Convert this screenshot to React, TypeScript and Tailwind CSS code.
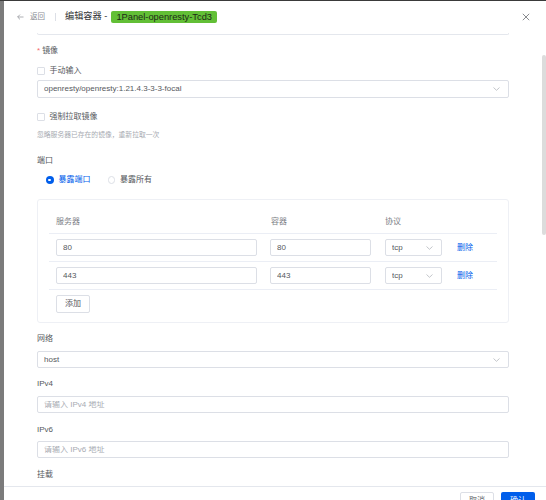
import React from "react";

const Chevron = ({ className = "" }: { className?: string }) => (
  <svg width="7" height="4" viewBox="0 0 7 4" className={className}>
    <path d="M0.5 0.5 L3.5 3.3 L6.5 0.5" fill="none" stroke="#b4b7bd" strokeWidth="0.8" />
  </svg>
);

const Box = ({
  children,
  h = "h-[18px]",
  arrow = false,
  className = "",
}: {
  children?: React.ReactNode;
  h?: string;
  arrow?: boolean;
  className?: string;
}) => (
  <div
    className={`${h} ${className} border border-[#dcdfe6] rounded-[2px] bg-white flex items-center pl-[6px] pr-[8px] text-[8px] leading-none`}
  >
    <div className="flex-1 truncate">{children}</div>
    {arrow && <Chevron />}
  </div>
);

const Label = ({ children, className = "" }: { children: React.ReactNode; className?: string }) => (
  <div className={`h-[12px] leading-[12px] text-[8px] text-[#55585d] ${className}`}>{children}</div>
);

const Checkbox = ({ label, className = "" }: { label: string; className?: string }) => (
  <div className={`h-[12px] flex items-center ${className}`}>
    <div className="w-[7.5px] h-[7.5px] border border-[#dcdfe6] rounded-[1px] bg-white" />
    <span className="ml-[5px] text-[8px] leading-[12px] text-[#55585d]">{label}</span>
  </div>
);

export default function App() {
  return (
    <div className="w-[546px] h-[500px] relative overflow-hidden bg-white flex flex-col font-['Liberation_Sans','Noto_Sans_CJK_SC',sans-serif]">
      <div className="h-[1px] bg-[#3a3a3a] shrink-0" />
      <div className="flex-1 flex min-h-0">
        <div className="w-[4px] bg-[#7b7b7b] shrink-0" />
        <div className="flex-1 flex flex-col min-w-0">
          {/* header */}
          <div className="h-[32px] shrink-0 flex items-center pl-[13px] pr-[16px]">
            <svg width="7" height="6" viewBox="0 0 7 6" className="shrink-0">
              <path d="M6.5 3 H0.8 M3 0.6 L0.6 3 L3 5.4" fill="none" stroke="#8a8d93" strokeWidth="0.7" />
            </svg>
            <span className="ml-[6px] text-[7.5px] text-[#8a8d93] leading-none">返回</span>
            <div className="ml-[10px] w-[1px] h-[8px] bg-[#dcdfe6]" />
            <span className="ml-[9px] text-[9.2px] text-[#303133] leading-none">编辑容器 -</span>
            <span className="ml-[4px] h-[12px] px-[5px] rounded-[2px] bg-[#62bf36] text-[#1d2a17] text-[9.3px] leading-[12px] flex items-center">
              1Panel-openresty-Tcd3
            </span>
            <div className="flex-1" />
            <svg width="8" height="8" viewBox="0 0 8 8">
              <path d="M0.8 0.8 L7.2 7.2 M7.2 0.8 L0.8 7.2" stroke="#6b6e73" strokeWidth="0.8" />
            </svg>
          </div>

          {/* content */}
          <div className="flex-1 min-h-0 overflow-hidden pl-[33px] pr-[37px] flex flex-col">
            <div className="h-[2px] shrink-0 border-b border-x border-[#e4e7ed] rounded-b-[3px]" />

            <Label className="mt-[10px] flex">
              <span className="text-[#f56c6c] mr-[2px]">*</span>
              <span>镜像</span>
            </Label>
            <Checkbox label="手动输入" className="mt-[8px]" />
            <Box arrow className="mt-[3px] text-[#55585d]">
              openresty/openresty:1.21.4.3-3-3-focal
            </Box>
            <Checkbox label="强制拉取镜像" className="mt-[13px]" />
            <div className="mt-[7px] h-[10px] leading-[10px] text-[6.8px] text-[#a8abb2]">
              忽略服务器已存在的镜像，重新拉取一次
            </div>

            <Label className="mt-[15px]">端口</Label>
            <div className="mt-[7px] h-[12px] flex items-center pl-[9px]">
              <div className="w-[7.5px] h-[7.5px] rounded-full bg-[#005eeb] flex items-center justify-center">
                <div className="w-[2.6px] h-[2.6px] rounded-full bg-white" />
              </div>
              <span className="ml-[5px] text-[8px] text-[#005eeb] leading-none">暴露端口</span>
              <div className="ml-[17px] w-[7.5px] h-[7.5px] rounded-full border border-[#dcdfe6] bg-white" />
              <span className="ml-[5px] text-[8px] text-[#55585d] leading-none">暴露所有</span>
            </div>

            {/* ports card */}
            <div className="mt-[13px] h-[124px] shrink-0 border border-[#eef0f5] rounded-[3px] pt-[10px] pb-[9px] pl-[11px] pr-[11px]">
              <div className="grid grid-cols-[215px_114px_72px_1fr] h-[24px] border-b border-[#ebeef5] items-center text-[8px] text-[#7d8086]">
                <div className="pl-[7px]">服务器</div>
                <div className="pl-[7px]">容器</div>
                <div className="pl-[7px]">协议</div>
                <div />
              </div>
              {["80", "443"].map((p) => (
                <div
                  key={p}
                  className="grid grid-cols-[215px_114px_72px_1fr] h-[28px] border-b border-[#ebeef5] items-center text-[8px]"
                >
                  <div className="pl-[7px] pr-[7px]">
                    <Box h="h-[17px]" className="text-[#55585d]">{p}</Box>
                  </div>
                  <div className="pl-[6px] pr-[7px]">
                    <Box h="h-[17px]" className="text-[#55585d]">{p}</Box>
                  </div>
                  <div className="pl-[7px] pr-[8px]">
                    <Box h="h-[17px]" arrow className="text-[#55585d]">tcp</Box>
                  </div>
                  <div className="pl-[7px] text-[#005eeb]">删除</div>
                </div>
              ))}
              <div className="mt-[5px] ml-[7px] w-[34px] h-[18px] border border-[#dcdfe6] rounded-[2px] flex items-center justify-center text-[8px] text-[#55585d]">
                添加
              </div>
            </div>

            <Label className="mt-[10px]">网络</Label>
            <Box h="h-[17px]" arrow className="mt-[6px] text-[#55585d]">host</Box>

            <Label className="mt-[10px]">IPv4</Label>
            <Box h="h-[17px]" className="mt-[6px] text-[#a8abb2]">请输入 IPv4 地址</Box>

            <Label className="mt-[11px]">IPv6</Label>
            <Box h="h-[17px]" className="mt-[5px] text-[#a8abb2]">请输入 IPv6 地址</Box>

            <Label className="mt-[11px]">挂载</Label>
          </div>

          {/* footer */}
          <div className="h-[14px] shrink-0 border-t border-[#e4e7ed] flex justify-end items-start pt-[5px] pr-[11px] gap-[7px] overflow-visible">
            <div className="w-[34px] h-[18px] shrink-0 border border-[#dcdfe6] rounded-[2px] bg-white flex items-center justify-center text-[8px] text-[#55585d]">
              取消
            </div>
            <div className="w-[34px] h-[18px] shrink-0 rounded-[2px] bg-[#005eeb] flex items-center justify-center text-[8px] text-white">
              确认
            </div>
          </div>
        </div>
      </div>
      <div className="absolute left-[542px] top-[55px] w-[4px] h-[180px] rounded-[2px] bg-[#dcdcdc]" />
    </div>
  );
}
